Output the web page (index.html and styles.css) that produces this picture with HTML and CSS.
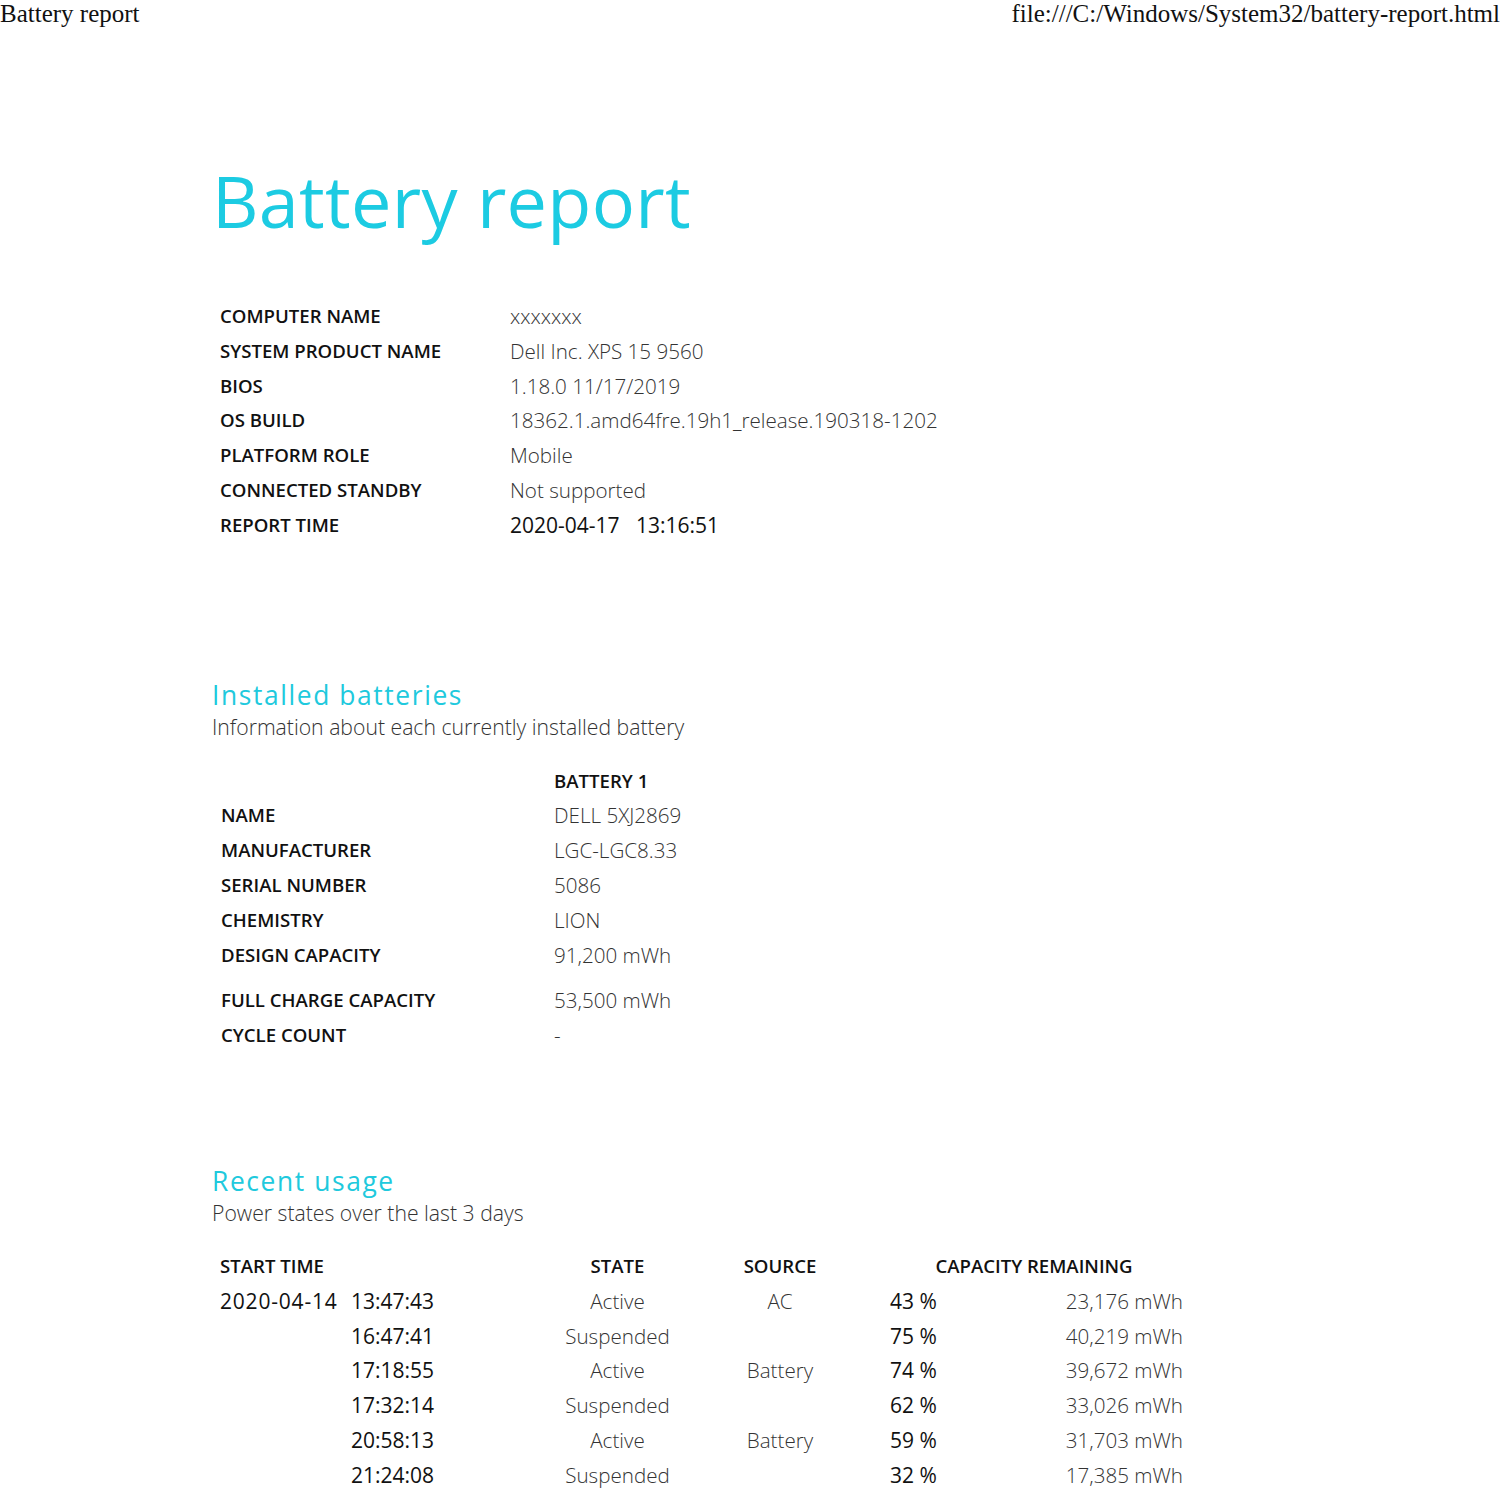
FILE: index.html
```html
<!DOCTYPE html>
<html>
<head>
<meta charset="utf-8">
<title>Battery report</title>
<link rel="stylesheet" href="styles.css">
</head>
<body>
<header class="print-head">
  <span>Battery report</span>
  <span>file:///C:/Windows/System32/battery-report.html</span>
</header>
<main class="report">
  <h1 class="title">Battery report</h1>

  <div class="info">
    <div class="lbl">COMPUTER NAME</div><div class="val">xxxxxxx</div>
    <div class="lbl">SYSTEM PRODUCT NAME</div><div class="val">Dell Inc. XPS 15 9560</div>
    <div class="lbl">BIOS</div><div class="val">1.18.0 11/17/2019</div>
    <div class="lbl">OS BUILD</div><div class="val">18362.1.amd64fre.19h1_release.190318-1202</div>
    <div class="lbl">PLATFORM ROLE</div><div class="val">Mobile</div>
    <div class="lbl">CONNECTED STANDBY</div><div class="val">Not supported</div>
    <div class="lbl">REPORT TIME</div><div class="val dark">2020-04-17 &nbsp;&nbsp;13:16:51</div>
  </div>

  <section class="sec sec-batt">
    <h2 class="sec-title">Installed batteries</h2>
    <div class="sec-sub">Information about each currently installed battery</div>
    <div class="batt">
      <div class="lbl"></div><div class="lbl">BATTERY 1</div>
      <div class="lbl">NAME</div><div class="val">DELL 5XJ2869</div>
      <div class="lbl">MANUFACTURER</div><div class="val">LGC-LGC8.33</div>
      <div class="lbl">SERIAL NUMBER</div><div class="val">5086</div>
      <div class="lbl">CHEMISTRY</div><div class="val">LION</div>
      <div class="lbl">DESIGN CAPACITY</div><div class="val">91,200 mWh</div>
      <div class="lbl gap">FULL CHARGE CAPACITY</div><div class="val gap">53,500 mWh</div>
      <div class="lbl">CYCLE COUNT</div><div class="val">-</div>
    </div>
  </section>

  <section class="sec sec-usage">
    <h2 class="sec-title">Recent usage</h2>
    <div class="sec-sub">Power states over the last 3 days</div>
    <div class="usage">
      <div class="lbl h-start">START TIME</div>
      <div class="lbl c-state">STATE</div>
      <div class="lbl c-src">SOURCE</div>
      <div class="lbl h-cap">CAPACITY REMAINING</div>

      <div class="dark c-date">2020-04-14</div><div class="dark">13:47:43</div><div class="val c-state">Active</div><div class="val c-src">AC</div><div class="dark c-pct">43 %</div><div class="val c-mwh">23,176 mWh</div>
      <div></div><div class="dark">16:47:41</div><div class="val c-state">Suspended</div><div class="val c-src"></div><div class="dark c-pct">75 %</div><div class="val c-mwh">40,219 mWh</div>
      <div></div><div class="dark">17:18:55</div><div class="val c-state">Active</div><div class="val c-src">Battery</div><div class="dark c-pct">74 %</div><div class="val c-mwh">39,672 mWh</div>
      <div></div><div class="dark">17:32:14</div><div class="val c-state">Suspended</div><div class="val c-src"></div><div class="dark c-pct">62 %</div><div class="val c-mwh">33,026 mWh</div>
      <div></div><div class="dark">20:58:13</div><div class="val c-state">Active</div><div class="val c-src">Battery</div><div class="dark c-pct">59 %</div><div class="val c-mwh">31,703 mWh</div>
      <div></div><div class="dark">21:24:08</div><div class="val c-state">Suspended</div><div class="val c-src"></div><div class="dark c-pct">32 %</div><div class="val c-mwh">17,385 mWh</div>
    </div>
  </section>
</main>
</body>
</html>
```

FILE: styles.css
```css
html, body {
  margin: 0;
  padding: 0;
  background: #ffffff;
}

body {
  width: 1500px;
  height: 1500px;
  overflow: hidden;
  font-family: "Open Sans", "Noto Sans", sans-serif;
  color: #222;
}

.print-head {
  display: flex;
  justify-content: space-between;
  font-family: "Liberation Serif", "Times New Roman", serif;
  font-size: 25px;
  line-height: 28px;
  color: #111;
  height: 28px;
}

.report {
  padding-left: 212px;
}

.title {
  margin: 122px 0 0 0;
  font-size: 72px;
  font-weight: 400;
  line-height: 100px;
  color: #1ccbe2;
  letter-spacing: 0.3px;
}

.lbl {
  font-weight: 600;
  font-size: 18.6px;
  color: #111;
  line-height: 34.8px;
}

.val {
  font-weight: 300;
  font-size: 20.6px;
  color: #333;
  line-height: 34.8px;
}

.dark {
  font-weight: 400;
  font-size: 21px;
  color: #111;
  line-height: 34.8px;
}

.info {
  margin-top: 49px;
  display: grid;
  grid-template-columns: 290px auto;
  padding-left: 8px;
}

.sec-title {
  margin: 0;
  font-size: 26.4px;
  font-weight: 400;
  color: #20c9dd;
  letter-spacing: 1.6px;
  line-height: 34px;
}

.sec-sub {
  font-size: 21.2px;
  font-weight: 300;
  color: #333;
  line-height: 30px;
}

.sec-batt {
  margin-top: 135px;
}

.batt {
  margin-top: 22px;
  display: grid;
  grid-template-columns: 333px auto;
  padding-left: 9px;
}

.batt .gap {
  padding-top: 11px;
}

.sec-usage {
  margin-top: 111px;
}

.usage {
  margin-top: 21px;
  display: grid;
  grid-template-columns: 131px 189px 155px 170px 145px 173px;
  padding-left: 8px;
}

.h-start {
  grid-column: 1 / span 2;
}

.c-date {
  letter-spacing: 0.8px;
}

.c-state, .c-src {
  text-align: center;
}

.h-cap {
  grid-column: 5 / span 2;
  text-align: center;
  padding-left: 20px;
}

.c-pct {
  padding-left: 25px;
}

.c-mwh {
  text-align: right;
}
```
